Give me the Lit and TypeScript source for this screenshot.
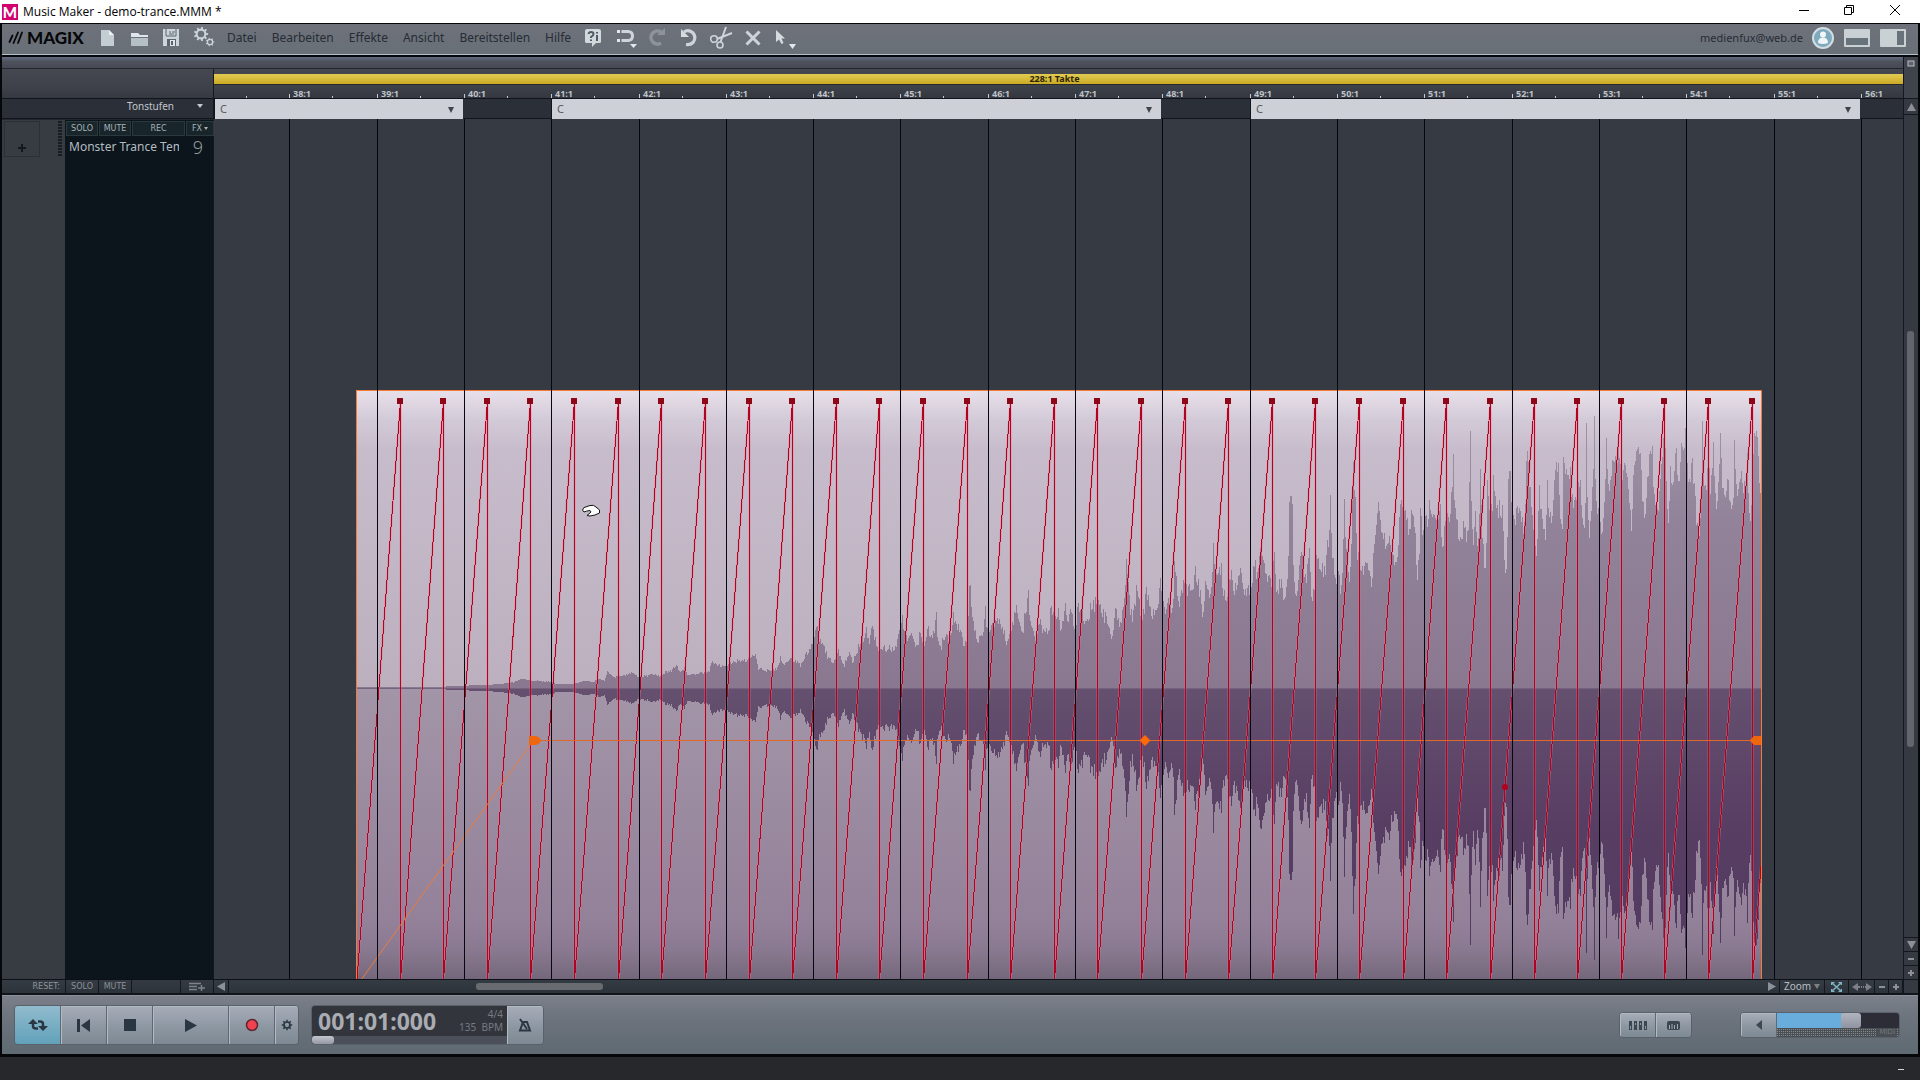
import { LitElement, html, svg, css } from "lit";
import { customElement } from "lit/decorators.js";

/* Timeline geometry, in px from the left edge of the track area. */
const ORIGIN = 214;
const BAR = 87.305;
const FIRST_BAR_X = 289.85 - ORIGIN;
const BARS = Array.from({ length: 19 }, (_, k) => ({
  label: `${38 + k}:1`,
  x: Math.floor(FIRST_BAR_X + BAR * k),
}));

const CLIP = { left: 356 - ORIGIN, right: 1761 - ORIGIN, top: 271, mid: 569, bottom: 861 };

const CHORDS = [
  { name: "C", from: 1, to: 249 },
  { name: "C", from: 338, to: 947 },
  { name: "C", from: 1037, to: 1646 },
];

/* Peak envelope of the audio object: x, amplitude pairs. */
const QUIET: number[] = [
  142, 1, 230, 1, 232, 2, 272, 3, 294, 5, 300, 6, 306, 9, 323, 7, 338, 6, 342, 4, 358, 4, 370, 7, 378, 6, 386, 9,
  390, 8, 393, 16, 400, 11, 409, 13, 419, 16, 424, 11, 430, 12, 439, 14, 445, 12, 449, 15, 456, 17, 463, 23, 465, 16,
  470, 20, 474, 13, 489, 15, 495, 16, 497, 27, 503, 22, 509, 23, 518, 25, 526, 28, 532, 28, 539, 34, 542, 30, 544, 19,
  550, 18, 556, 17, 562, 19, 566, 30, 570, 24, 577, 28, 584, 26,
];
const MIDDLE: number[] = [
  0, 320, 15, 290, 30, 265, 50, 207, 60, 245, 70, 250, 80, 290, 100, 305, 113, 265, 130, 320, 147, 270, 155, 305, 168,
  285, 175, 255, 185, 240, 198, 215, 205, 250, 215, 205, 225, 240, 235, 270, 260, 265, 280, 270, 290, 250, 300, 190,
  308, 170, 315, 240, 330, 225, 350, 260, 360, 212, 370, 270, 380, 205, 395, 225, 408, 160, 420, 270, 430, 225, 445,
  240, 460, 160, 465, 190, 480, 205, 490, 265, 500, 225, 507, 70, 512, 110, 520, 190, 530, 240, 545, 235, 555, 130,
  562, 220, 575, 200, 590, 170, 605, 195, 620, 250, 630, 225, 640, 180, 653, 135, 665, 230, 672, 170, 684, 75, 692,
  200, 705, 235, 718, 165, 728, 215, 745, 215, 752, 97, 760, 170, 775, 155, 780, 200, 796, 108, 805, 185, 815, 145,
  825, 225, 830, 135, 840, 150, 850, 170, 860, 190, 870, 150, 890, 125, 905, 160, 920, 180, 935, 235, 945, 135, 955,
  190, 965, 170, 978, 0, 985, 80, 995, 175, 1010, 60, 1025, 165, 1040, 65, 1050, 155, 1070, 160, 1077, 68, 1085, 100,
  1095, 170, 1105, 115, 1115, 150, 1123, -60, 1135, 120, 1155, 30, 1160, 100, 1170, 90, 1185, 20, 1200, 95, 1207, 175,
  1215, 55, 1225, 115, 1240, -45, 1250, 60, 1263, 0, 1275, 120, 1290, 35, 1300, 95, 1320, 0, 1328, 90, 1340, 110,
  1352, 70, 1360, 20, 1370, 35, 1385, -75, 1395, 40, 1410, 60, 1423, -30, 1430, 100,
];
const LOUD: number[] = [
  0, 610, 12, 655, 20, 600, 27, 350, 36, 365, 45, 655, 55, 570, 68, 520, 75, 590, 88, 470, 94, 670, 105, 555, 115, 540,
  130, 580, 140, 495, 150, 370, 158, 540, 168, 600, 172, 570, 180, 620, 192, 378, 205, 590, 219, 240, 225, 345, 230,
  510, 245, 570, 260, 530, 272, 620, 280, 500, 295, 345, 305, 450, 318, 490, 326, 475, 335, 530, 345, 535, 360, 365,
  368, 400, 376, 380, 385, 460, 392, 410, 405, 435, 410, 590, 420, 400, 430, 460, 436, 430, 448, 360, 455, 390, 470,
  430, 480, 390, 487, 510, 492, 440, 505, 410, 519, 230, 530, 440, 545, 480, 550, 405, 560, 470, 570, 135, 578, 490,
  585, 380, 592, 480, 600, 280, 605, 400, 614, 555, 621, 275, 632, 395, 639, 300, 650, 400, 657, 385, 668, 400, 677,
  575, 683, 285, 692, 285, 700, 440, 708, 370, 720, 420, 730, 440, 740, 135, 750, 330, 758, 410, 768, 510, 776, 290,
  785, 415, 795, 460, 801, 280, 810, 420, 825, 270, 835, 260, 845, 480, 849, 210, 861, 305, 870, 260, 880, 390, 891,
  290, 902, 305, 910, 470, 918, 130, 926, 455, 935, 320, 942, 130, 950, 410, 958, 370, 965, 450, 978, 165, 985, 330,
  998, 230, 1008, 260, 1015, 130, 1023, 300, 1033, 220, 1045, 310, 1052, 430, 1060, 235, 1070, 230, 1082, 190, 1090,
  400, 1100, 310, 1108, 200, 1116, 220, 1127, 410, 1140, 280, 1154, 40, 1163, 440, 1170, 255, 1178, 320, 1187, 160,
  1195, 300, 1203, 170, 1210, 220, 1217, 90, 1225, 310, 1236, 225, 1245, 350, 1255, 470, 1266, 150, 1275, 325, 1286,
  190, 1290, 320, 1299, 205, 1308, 370, 1320, 140, 1330, 350, 1342, 260, 1355, 400, 1362, 175, 1370, 350, 1380, 275,
  1390, 330, 1402, 215, 1409, 440, 1416, 200, 1430, 115, 1436, 280, 1443, 360,
];

function pairs(flat: number[], x0: number, scale: number, base: number): [number, number][] {
  const out: [number, number][] = [];
  for (let i = 0; i < flat.length; i += 2) {
    out.push([x0 + flat[i] / scale, base ? (base - flat[i + 1]) / scale : flat[i + 1]]);
  }
  return out;
}

const ENVELOPE = [...pairs(QUIET, 0, 1, 0), ...pairs(MIDDLE, 586, 3, 385), ...pairs(LOUD, 1066, 3, 925)];

/* One amplitude per pixel column: peaks fall off quickly, so spikes stay narrow. */
function columns(): number[] {
  const out: number[] = [];
  let i = 0;
  for (let x = CLIP.left; x < CLIP.right; x++) {
    while (i < ENVELOPE.length - 2 && ENVELOPE[i + 1][0] <= x) i++;
    const [xa, a] = ENVELOPE[i];
    const [xb, b] = ENVELOPE[i + 1];
    const t = Math.min(1, Math.max(0, (x - xa) / (xb - xa)));
    const sharp = Math.abs(a - b) > 20 ? 2.2 : 1.2;
    const eased = a > b ? Math.pow(t, 1 / sharp) : Math.pow(t, sharp);
    const v = a + (b - a) * eased;
    const noise = Math.abs(Math.sin(x * 127.1) * 43758.5) % 1;
    const grain = v > 5 ? (noise - 0.5) * Math.min(18, v * 0.18) : 0;
    out.push(Math.max(1, Math.round(v + grain)));
  }
  return out;
}

const COLS = columns();
function wavePath(dir: number): string {
  let d = `M${CLIP.left} ${CLIP.mid}`;
  COLS.forEach((a, i) => {
    d += `V${CLIP.mid + dir * a}H${CLIP.left + i + 1}`;
  });
  return d + `V${CLIP.mid}Z`;
}
const WAVE_UP = wavePath(-1);
const WAVE_DOWN = wavePath(1);

/* Saw-tooth automation: 32 ramps, then one cut off by the end of the object. */
const SAW_STEP = 43.61;
const PEAKS = Array.from({ length: 32 }, (_, n) => Math.floor(186.15 + SAW_STEP * n));
const SAW_TOP = 282;
let sawPath = `M${CLIP.left + 1} 861`;
PEAKS.forEach((x) => {
  sawPath += `L${x + 0.5} ${SAW_TOP}V861`;
});
sawPath += `L${CLIP.right} 747`;

@customElement("app-root")
export class AppRoot extends LitElement {
  static styles = css`
    :host {
      display: flex;
      flex-direction: column;
      min-height: 100vh;
      background: #27282c;
      font-family: "Noto Sans", "Open Sans", sans-serif;
      font-size: 12px;
      color: #c3c7cc;
      --line: #15181e;
    }
    * { box-sizing: border-box; }
    button, select, input { font: inherit; color: inherit; margin: 0; padding: 0; border: 0; border-radius: 0; background: none; }
    svg { display: block; flex: none; }
    a { color: inherit; text-decoration: none; }

    .title { display: flex; align-items: center; height: 23px; padding: 0 16px 0 2px; background: #fff; color: #000; font-family: "Open Sans", "Noto Sans", sans-serif; font-size: 12px; }
    .title h1 { margin: 0 auto 0 5px; font: inherit; }
    .app-icon { display: grid; place-items: center; width: 16px; height: 16px; background: #d3006f; color: #fff; font: 900 15px/16px Lato, sans-serif; }
    .win { align-self: flex-start; display: grid; place-items: center; width: 45px; height: 20px; }
    .win:last-child { width: 18px; margin-left: 15px; }

    .frame { flex: 1; display: flex; flex-direction: column; padding: 1px 2px 3px; background: #05070b; }
    .menu { display: flex; align-items: center; height: 31px; padding: 0 12px 3px 6px; background: linear-gradient(#6e7179, #697078); border-bottom: 1px solid #b3c0ca; color: #262c35; }
    .brand { display: flex; align-items: center; gap: 4px; width: 83px; color: #05070a; font: 900 17px/20px Lato, sans-serif; }
    .tool { display: grid; place-items: center; width: 32px; height: 28px; }
    .menu nav { display: flex; gap: 15px; margin: 0 6px 0 8px; line-height: 20px; }
    .account { display: flex; align-items: center; gap: 9px; margin-left: auto; font-size: 11px; line-height: 20px; }
    .panes { display: flex; gap: 10px; margin-left: 10px; }

    .editor { flex: 1; display: flex; margin-top: 2px; background: #363b43; }
    .stage { flex: 1; min-width: 0; display: flex; flex-direction: column; }
    .overview { height: 12px; border-bottom: 1px solid #23262e; background: linear-gradient(#626b80, #4e525d 40%, #474a54); }
    .row { display: flex; }
    .side { flex: none; width: 212px; border-right: 1px solid var(--line); }
    .fill { flex: 1; min-width: 0; overflow: hidden; }

    .ruler { height: 30px; border-bottom: 1px solid #12141b; background: linear-gradient(#454851, #3f424a 60%, #353941); }
    .ruler .fill { padding-top: 5px; }
    .range { height: 11px; border-bottom: 1px solid #2a2a2a; background: linear-gradient(#e2cb53, #cbab25); color: #2c2504; font-size: 9px; font-weight: 700; line-height: 10px; text-align: center; padding-right: 8px; }
    .marks { width: 100%; height: 13px; background: linear-gradient(#3f434b, #343740); }
    .marks text { font-size: 9px; font-weight: 700; fill: #bdc2c8; }

    .chords { height: 20px; border-bottom: 1px solid #12141b; background: #2b2f38; }
    .degree { display: flex; align-items: center; justify-content: flex-end; gap: 23px; width: 100%; height: 14px; padding-right: 10px; font-size: 10px; }
    .chord { position: relative; flex: none; height: 20px; }
    .chord select { display: block; appearance: none; width: 100%; height: 20px; padding-left: 5px; background: #cdd0d6; color: #575b61; font-size: 11px; line-height: 18px; }
    .chord svg { position: absolute; right: 9px; top: 8px; pointer-events: none; }
    .chords .fill { overflow: visible; }
    .gap { flex: none; border-right: 1px solid #12141b; }

    .tracks { flex: 1; min-height: 860px; align-items: stretch; }
    .tracks .side { display: flex; background: #373b42; border-top: 1px solid #24282e; }
    .gutter { display: flex; justify-content: space-between; width: 63px; padding: 1px 3px 0 2px; }
    .add { display: grid; place-items: end center; width: 36px; height: 36px; padding-bottom: 3px; border: 1px solid #2c3036; color: #14181d; }
    .grip { width: 4px; height: 35px; background: repeating-linear-gradient(#191d23 0 2px, transparent 2px 3px); }
    .head { flex: 1; min-width: 0; padding: 1px 0 0 1px; background: #0b151b; }
    .keys { display: grid; grid-template-columns: 32px 32px 53px 28px; gap: 1px; }
    .key { display: flex; align-items: center; justify-content: center; gap: 2px; height: 15px; border: 1px solid #2b383c; background: #18262b; color: #a9b1b5; font: 8px/10px "DejaVu Sans", sans-serif; }
    .name { display: flex; align-items: center; justify-content: space-between; height: 21px; padding: 0 10px 0 3px; color: #b4bcc1; }
    .name span { width: 110px; overflow: hidden; white-space: nowrap; }
    .name b { font-size: 18px; font-weight: 300; color: #93999d; }
    .lane { width: 100%; height: 100%; }

    .foot { height: 16px; border-top: 1px solid #0d1017; border-bottom: 2px solid #10141b; background: linear-gradient(#353b43, #2d333a); color: #8e949a; }
    .foot .side { display: flex; justify-content: flex-end; }
    .cell { display: grid; place-items: center; height: 13px; border-right: 1px solid #14171d; font: 8px/10px "DejaVu Sans", sans-serif; color: #8b9197; }
    .side .cell { border-right: 0; border-left: 1px solid #14171d; }
    .w1 { width: 14px; } .w2 { width: 15px; } .w3 { width: 24px; } .w4 { width: 26px; } .w5 { width: 33px; } .w6 { width: 45px; } .w7 { width: 49px; }
    .reset { margin-right: 5px; font: 8px/13px "DejaVu Sans", sans-serif; }
    .zoom { display: flex; align-items: center; justify-content: center; gap: 3px; font: 10px/13px "Noto Sans", sans-serif; color: #b9bec4; }
    .hscroll { flex: 1; padding: 3px 0 0 247px; }
    .thumb { width: 127px; height: 7px; border-radius: 3px; background: #686b70; }

    .vbar { display: flex; flex-direction: column; width: 15px; border-left: 1px solid #14171d; background: #353941; }
    .vbar button { display: grid; place-items: center; height: 14px; border-top: 1px solid #14171d; }
    .vbar .corner { height: 41px; padding-bottom: 29px; border: 0; background: #3f434c; }
    .vbar .up { height: 17px; border-bottom: 1px solid #14171d; }
    .vtrack { flex: 1; padding: 216px 4px 0 3px; }
    .vthumb { height: 416px; border-radius: 3px; background: #62656b; }
    .vbar .end { height: 16px; border-top: 1px solid #14171d; border-bottom: 2px solid #10141b; }

    .transport { display: flex; align-items: flex-start; height: 59px; padding: 9px 18px 0 12px; border-top: 1px solid #8b909b; background: linear-gradient(#7a7f8a, #6b727b 45%, #5f6a73); }
    .group { display: flex; border: 1px solid #59616a; border-radius: 4px; overflow: hidden; }
    .group button { display: grid; place-items: center; height: 38px; border-right: 1px solid #5f6871; background: linear-gradient(#a6adb9, #8d97a2 55%, #7d8993); box-shadow: inset 1px 1px 0 #b3bac4; }
    .group button:last-child { border-right: 0; }
    .group .on { background: linear-gradient(#92bbce, #76adc2 55%, #62a2ba); box-shadow: none; }
    .b1 { width: 46px; } .b2 { width: 76px; } .b3 { width: 23px; } .b4 { width: 35px; } .b5 { width: 36px; }
    .display { margin-left: 12px; }
    .readout { width: 195px; background: #4b4f59; }
    .digits { display: flex; justify-content: space-between; align-items: center; height: 30px; padding: 0 4px 0 6px; background: #33353d; color: #a9acb2; }
    .time { font-size: 23px; font-weight: 700; line-height: 30px; }
    .tempo { color: #777a82; font-size: 10px; line-height: 13px; text-align: right; white-space: pre; }
    .shuttle { appearance: none; display: block; width: 100%; height: 8px; }
    .shuttle::-webkit-slider-thumb { appearance: none; width: 22px; height: 8px; border-radius: 3px; background: linear-gradient(#c3c6cf, #9598a3); }
    .right { display: flex; gap: 48px; margin: 7px 0 0 auto; }
    .right .group button { height: 24px; }
    .level { display: flex; flex-direction: column; width: 122px; background: #4a4f55; }
    .volume { appearance: none; display: block; width: 122px; height: 15px; background: linear-gradient(90deg, #68addb 66px, #2c2d36 66px); }
    .volume::-webkit-slider-thumb { appearance: none; width: 20px; height: 15px; border-radius: 3px; background: linear-gradient(#b1b5c0, #9094a0); }
    .meter { display: flex; justify-content: flex-end; align-items: center; height: 9px; padding-right: 3px; color: #74787d; font: 7px/9px "DejaVu Sans", sans-serif; background: repeating-linear-gradient(90deg, transparent 0 1px, #4a4f55 1px 2px), repeating-linear-gradient(#4a4f55 0 1px, #858b8a 1px 2px); }
    .meter span { padding: 0 1px 0 2px; background: #4a4f55; }
    .tray { display: flex; justify-content: flex-end; height: 23px; padding: 12px 16px 0 0; }
    .tray i { width: 6px; height: 1px; background: #d5d5d5; }
  `;

  private menuItems = ["Datei", "Bearbeiten", "Effekte", "Ansicht", "Bereitstellen", "Hilfe"];

  private tri(dir: "down" | "up" | "left" | "right", w = 8, h = 6, fill = "#8d9197") {
    const d = {
      down: `M0 0H${w}L${w / 2} ${h}Z`,
      up: `M0 ${h}H${w}L${w / 2} 0Z`,
      left: `M${w} 0V${h}L0 ${h / 2}Z`,
      right: `M0 0V${h}L${w} ${h / 2}Z`,
    }[dir];
    return html`<svg width=${w} height=${h} aria-hidden="true"><path d=${d} fill=${fill} /></svg>`;
  }

  private tool(label: string, art: unknown) {
    return html`<button class="tool" aria-label=${label}>
      <svg width="28" height="28" viewBox="0 0 28 28" fill="none" stroke="#cdd5da" stroke-width="2">${art}</svg>
    </button>`;
  }

  private title() {
    return html`<header class="title">
      <span class="app-icon" aria-hidden="true">M</span>
      <h1>Music Maker - demo-trance.MMM *</h1>
      <button class="win" aria-label="Minimieren"><svg width="10" height="10"><path d="M0 5.5H10" stroke="#000" /></svg></button>
      <button class="win" aria-label="Verkleinern"><svg width="10" height="10" fill="none" stroke="#000"><path d="M.5 2.5H7.5V9.5H.5ZM2.5 2.5V.5H9.5V7.5H7.5" /></svg></button>
      <button class="win" aria-label="Schließen"><svg width="10" height="10"><path d="M0 0L10 10M10 0L0 10" stroke="#000" /></svg></button>
    </header>`;
  }

  private gear(cx: number, cy: number, r: number, teeth: number, w: number) {
    return svg`<circle cx=${cx} cy=${cy} r=${r} stroke-width=${w} />${Array.from({ length: teeth }, (_, i) => {
      const a = (i * 2 * Math.PI) / teeth;
      const p = (k: number) => `${cx + Math.cos(a) * k} ${cy + Math.sin(a) * k}`;
      return svg`<path d=${`M${p(r)}L${p(r + w * 1.3)}`} stroke-width=${w * 0.85} />`;
    })}`;
  }

  private menu() {
    return html`<div class="menu">
      <div class="brand">
        <svg width="15" height="13" viewBox="0 0 15 13"><path d="M1.500 11L4.500 4.500M5.500 12L10 1.500M10 12L14 1.500" stroke="#05070a" stroke-width="1.8" stroke-linecap="round" /></svg>
        <span>MAGIX</span>
      </div>
      ${this.tool("Neu", svg`<path d="M8 6H16L21 11V22H8Z" fill="#c3cdd2" stroke="none" /><path d="M16 6V11H21Z" fill="#eef2f4" stroke="none" />`)}
      ${this.tool("Öffnen", svg`<path d="M6 9H13L15 11H23V13H6Z" fill="#dfe5e8" stroke="none" /><path d="M6 14H23V22H6Z" fill="#b4c0c6" stroke="none" />`)}
      ${this.tool("Speichern", svg`<path d="M6 5H22V22H6Z" fill="#ccd5da" stroke="none" /><path d="M9 5V12H19V5M12 8H14M15 8H18M12 10H17" stroke="#5b646c" stroke-width="1" /><path d="M10 15H19V22H10Z" fill="#5b646c" stroke="none" /><path d="M13 16H18V22H13Z" fill="#dfe5e8" stroke="none" /><path d="M15 17V21" stroke="#5b646c" />`)}
      ${this.tool("Einstellungen", svg`${this.gear(12, 10, 4.4, 9, 2.1)}${this.gear(21, 18, 2.6, 7, 1.3)}`)}
      <nav aria-label="Hauptmenü">${this.menuItems.map((m) => html`<a href="#">${m}</a>`)}</nav>
      ${this.tool("Hilfe-Assistent", svg`<path d="M6 7Q6 5 8 5H20Q22 5 22 7V18Q22 19 20 19H17L13 23V19H8Q6 19 6 18Z" fill="#d2d9dd" stroke="none" /><path d="M9.500 10Q10 8 12 8Q14.500 8 14.500 10Q14.500 11.500 12 13V14M12 15.500V17M18 11V17M18 8V9.500" stroke="#525b63" />`)}
      ${this.tool("Magnetraster", svg`<path d="M6 7.500H9M6 16.500H9" stroke-width="3" stroke="#e3e8eb" /><path d="M10.500 7.500H17.500Q21.500 8 21.500 12T17.500 16.500H10.500" stroke-width="3" /><path d="M19 20H26L22.500 24Z" fill="#e3e8eb" stroke="none" />`)}
      ${this.tool("Wiederholen", svg`<path d="M18 8A6.500 6.500 0 1 0 18 19" stroke="#8c949a" stroke-width="3.500" /><path d="M14 11H22V4Z" fill="#8c949a" stroke="none" />`)}
      ${this.tool("Rückgängig", svg`<path d="M9 8Q13 5 17.500 8.500Q22 13 18 18.500Q15.500 21 11 20.500" stroke-width="3.200" /><path d="M6 5V13H14Z" fill="#d5dce0" stroke="none" />`)}
      ${this.tool("Schneiden", svg`<circle cx="7" cy="15" r="3.300" stroke-width="1.600" /><circle cx="13" cy="21" r="3" stroke-width="1.600" /><path d="M10 15L25 9M13.500 18L19 3" />`)}
      ${this.tool("Löschen", svg`<path d="M7.500 7.500L20.500 20.500M20.500 7.500L7.500 20.500" stroke-width="3" />`)}
      ${this.tool("Mausmodus", svg`<path d="M5 6V18L8 15.500L10.500 20L12.500 19L10.500 14.500H14Z" fill="#d5dce0" stroke="none" /><path d="M18 20H25L21.500 25Z" fill="#e3e8eb" stroke="none" />`)}
      <div class="account">
        <a href="#">medienfux@web.de</a>
        <svg width="22" height="22" viewBox="0 0 22 22"><circle cx="11" cy="11" r="10" fill="#7fa9bd" stroke="#d3dee4" stroke-width="2" /><circle cx="11" cy="7.500" r="3" fill="#f1f5f7" /><path d="M6 16Q6 10.500 11 10.500T16 16Q11 18 6 16Z" fill="#f1f5f7" /></svg>
      </div>
      <div class="panes">
        <button aria-label="Mediapool unten"><svg width="26" height="18"><rect width="26" height="18" rx="1" fill="#c9d1d5" /><rect x="2" y="9" width="22" height="7" fill="#68727a" /></svg></button>
        <button aria-label="Mediapool rechts"><svg width="26" height="18"><rect width="26" height="18" rx="1" fill="#c9d1d5" /><rect x="17" y="2" width="7" height="14" fill="#68727a" /></svg></button>
      </div>
    </div>`;
  }

  private ruler() {
    return html`<div class="row ruler">
      <div class="side"></div>
      <div class="fill">
        <div class="range">228:1 Takte</div>
        <svg class="marks">
          ${BARS.map((b) => svg`<path d=${`M${b.x + 0.5} 9V13M${b.x + 43.5} 11V13`} stroke="#c6cad0" /><text x=${b.x + 4} y="12">${b.label}</text>`)}
          <path d="M32.500 11V13" stroke="#c6cad0" />
        </svg>
      </div>
    </div>`;
  }

  private chords() {
    let x = 0;
    return html`<div class="row chords">
      <div class="side"><button class="degree">Tonstufen ${this.tri("down", 6, 4, "#c3c7cc")}</button></div>
      <div class="fill row">
        ${CHORDS.map((c) => {
          const gap = c.from - x;
          x = c.to;
          return html`<span class="gap" style="width:${gap}px"></span>
            <label class="chord" style="width:${c.to - c.from}px">
              <select aria-label="Akkord"><option>${c.name}</option></select>
              ${this.tri("down", 6, 6, "#3f444b")}
            </label>`;
        })}
      </div>
    </div>`;
  }

  private lane() {
    const { left, right, top, mid, bottom } = CLIP;
    const w = right - left;
    return svg`
      <defs>
        <linearGradient id="up" x1="0" x2="0" y1="0" y2="1">
          <stop offset="0" stop-color="#e8e0e9" /><stop offset=".1" stop-color="#d3cad8" /><stop offset=".2" stop-color="#c7bccb" /><stop offset="1" stop-color="#bcb0bf" />
        </linearGradient>
        <linearGradient id="low" x1="0" x2="0" y1="0" y2="1">
          <stop offset="0" stop-color="#a395a8" /><stop offset=".8" stop-color="#938199" /><stop offset=".9" stop-color="#897990" /><stop offset="1" stop-color="#73667a" />
        </linearGradient>
        <linearGradient id="waveUp" gradientUnits="userSpaceOnUse" x1="0" x2="0" y1="290" y2="569">
          <stop offset="0" stop-color="#a094a6" /><stop offset=".4" stop-color="#92839a" /><stop offset="1" stop-color="#8a7890" />
        </linearGradient>
        <linearGradient id="waveLow" gradientUnits="userSpaceOnUse" x1="0" x2="0" y1="569" y2="840">
          <stop offset="0" stop-color="#65506f" /><stop offset=".5" stop-color="#583e63" /><stop offset="1" stop-color="#523a60" />
        </linearGradient>
      </defs>
      <rect x=${left} y=${top} width=${w} height=${mid - top} fill="url(#up)" />
      <rect x=${left} y=${mid} width=${w} height=${bottom - mid} fill="url(#low)" />
      <rect x=${left} y=${bottom} width=${w} height="400" fill="#73667a" />
      <g shape-rendering="crispEdges">
        <path d=${WAVE_UP} fill="url(#waveUp)" />
        <path d=${WAVE_DOWN} fill="url(#waveLow)" />
        <path d=${`M${left} ${mid}H${right}`} stroke="#75637e" />
      </g>
      <path d=${sawPath} fill="none" stroke="#f26b86" stroke-opacity=".5" stroke-width="2" />
      <path d=${sawPath} fill="none" stroke="#b00322" stroke-linejoin="bevel" shape-rendering="crispEdges" />
      ${PEAKS.map((x) => svg`<rect x=${x - 3} y="279" width="6" height="6" fill="#8f0716" />`)}
      <circle cx="1291" cy="668" r="3" fill="#b3001b" />
      <path d="M147 861L319 622" stroke="#f07a3a" />
      <path d=${`M317 621.500H${right}`} stroke="#e0692a" />
      <path d="M315 617H322Q326 618 327 621.500Q326 625 322 626H315Z" fill="#ee660d" />
      <path d="M931 616L936.500 621.500L931 627L925.500 621.500Z" fill="#ff6a08" />
      <path d=${`M${right + 1} 617H1540L1535.500 621.500L1540 626H${right + 1}Z`} fill="#ee660d" />
      <path d=${`M${left + 0.5} 1400V${top + 0.5}H${right + 0.5}V1400`} fill="none" stroke="#f47a35" />
      <path d=${BARS.map((b) => `M${b.x + 0.5} 0V2000`).join("")} stroke="#07080f" />
      <path d="M368.500 391Q369 388 373 387.500L376 386.500Q380 385.500 382 388L385.500 391V394L381 396L376 397L373 396.500L377 393L376 391.500Q372 392 370 393Z" fill="#fff" stroke="#111" stroke-linejoin="round" />`;
  }

  private tracks() {
    return html`<div class="row tracks">
      <div class="side">
        <div class="gutter">
          <button class="add" aria-label="Spur hinzufügen"><svg width="10" height="10"><path d="M1 5H9M5 1V9" stroke="#14181d" stroke-width="2" /></svg></button>
          <div class="grip"></div>
        </div>
        <div class="head">
          <div class="keys">
            <button class="key">SOLO</button><button class="key">MUTE</button><button class="key">REC</button>
            <button class="key">FX ${this.tri("down", 4, 3, "#a9b1b5")}</button>
          </div>
          <div class="name"><span>Monster Trance Tem</span><b>9</b></div>
        </div>
      </div>
      <div class="fill"><svg class="lane" role="img" aria-label="Arranger">${this.lane()}</svg></div>
    </div>`;
  }

  private foot() {
    return html`<div class="row foot">
      <div class="side">
        <span class="reset">RESET:</span>
        <button class="cell w5">SOLO</button><button class="cell w5">MUTE</button><span class="cell w7"></span>
        <button class="cell w5" aria-label="Spur anfügen"><svg width="16" height="9" fill="none" stroke="#7d8389"><path d="M0 1.500H12M0 4.500H8M0 7.500H8M12.500 3V9M9 6H16" stroke-width="1.500" /></svg></button>
      </div>
      <div class="fill row">
        <button class="cell w2" aria-label="Nach links">${this.tri("left", 8, 9)}</button>
        <div class="hscroll"><div class="thumb"></div></div>
        <button class="cell w2" aria-label="Nach rechts">${this.tri("right", 8, 9)}</button>
        <button class="cell w6 zoom">Zoom ${this.tri("down", 6, 5, "#7d8187")}</button>
        <button class="cell w3" aria-label="Alles zeigen"><svg width="11" height="10" viewBox="0 0 11 10" stroke="#7fb4c4" fill="none"><path d="M1 1L10 9M10 1L1 9" stroke-width="1.500" /><path d="M.5 3V.5H3.500M7.500 .5H10.500V3M10.500 7V9.500H7.500M3.500 9.500H.5V7" stroke-width="1.500" /></svg></button>
        <button class="cell w4" aria-label="Zoombereich"><svg width="20" height="8" fill="#7d8187"><path d="M0 4L6 0V8ZM20 4L14 0V8ZM6 3H8V5H6ZM9 3H10V5H9ZM11 3H12V5H11ZM13 3H14V5H13Z" /></svg></button>
        <button class="cell w1" aria-label="Herauszoomen"><svg width="6" height="6"><path d="M0 3H6" stroke="#8d9197" stroke-width="2" /></svg></button>
        <button class="cell w1" aria-label="Hineinzoomen"><svg width="6" height="6"><path d="M0 3H6M3 0V6" stroke="#8d9197" stroke-width="2" /></svg></button>
      </div>
    </div>`;
  }

  private vbar() {
    return html`<div class="vbar">
      <button class="corner" aria-label="Vollbild"><svg width="8" height="7"><rect x="1" y="1" width="6" height="5" fill="#5f636b" stroke="#b9bdc4" /></svg></button>
      <button class="up" aria-label="Nach oben">${this.tri("up", 9, 8)}</button>
      <div class="vtrack"><div class="vthumb"></div></div>
      <button aria-label="Nach unten">${this.tri("down", 9, 8)}</button>
      <button aria-label="Höhe verringern"><svg width="6" height="6"><path d="M0 3H6" stroke="#8d9197" stroke-width="2" /></svg></button>
      <button aria-label="Höhe vergrößern"><svg width="6" height="6"><path d="M0 3H6M3 0V6" stroke="#8d9197" stroke-width="2" /></svg></button>
      <div class="end"></div>
    </div>`;
  }

  private transport() {
    const ink = "#2a3742";
    return html`<div class="transport">
      <div class="group">
        <button class="b1 on" aria-label="Loop"><svg width="20" height="12" viewBox="0 0 20 12" fill="none" stroke=${ink} stroke-width="2.500"><path d="M10 9.500H8Q5 9.500 5 7V4M10 2.500H12Q15 2.500 15 5V8" /><path d="M0 5L5 0L10 5ZM10 7H20L15 12Z" fill=${ink} stroke="none" /></svg></button>
        <button class="b1" aria-label="An den Anfang"><svg width="13" height="13" fill=${ink}><path d="M0 0H3V13H0ZM13 0V13L4 6.500Z" /></svg></button>
        <button class="b1" aria-label="Stopp"><svg width="12" height="12" fill=${ink}><path d="M0 0H12V12H0Z" /></svg></button>
        <button class="b2" aria-label="Wiedergabe"><svg width="12" height="13" fill=${ink}><path d="M0 0L12 6.500L0 13Z" /></svg></button>
        <button class="b1" aria-label="Aufnahme"><svg width="14" height="14"><circle cx="7" cy="7" r="5.500" fill="#f0434f" stroke="#5a2630" stroke-width="1.500" /></svg></button>
        <button class="b3" aria-label="Aufnahmeoptionen"><svg width="14" height="14" fill="none" stroke=${ink}>${this.gear(7, 7, 3, 8, 1.7)}</svg></button>
      </div>
      <div class="group display">
        <div class="readout">
          <div class="digits"><span class="time">001:01:000</span><span class="tempo">4/4
135  BPM</span></div>
          <input class="shuttle" type="range" min="0" max="100" value="0" aria-label="Position" />
        </div>
        <button class="b5" aria-label="Metronom"><svg width="14" height="14" fill="none" stroke=${ink} stroke-width="2"><path d="M5 4L2 12.500H12L9 4H5M2 1L9 11" /></svg></button>
      </div>
      <div class="right">
        <div class="group">
          <button class="b5" aria-label="Mixer"><svg width="18" height="9" fill="#3a4650"><path d="M0 0H3V9H0ZM5 0H8V9H5ZM10 0H13V9H10ZM15 0H18V9H15Z" /><path d="M1 5H2V8H1ZM6 2H7V4H6ZM11 2H12V4H11ZM16 5H17V8H16Z" fill="#8d97a2" /></svg></button>
          <button class="b4" aria-label="Keyboard"><svg width="13" height="9"><rect width="13" height="9" rx="2" fill="#3a4650" /><path d="M2.500 4V8M5 3V8M7.500 4V8M10.500 3V8" stroke="#a0a9b2" /></svg></button>
        </div>
        <div class="group">
          <button class="b5" aria-label="Ton">${this.tri("left", 6, 10, "#3a4650")}</button>
          <div class="level">
            <input class="volume" type="range" min="0" max="100" value="63" aria-label="Lautstärke" />
            <div class="meter"><span>MIDI</span></div>
          </div>
        </div>
      </div>
    </div>`;
  }

  render() {
    return html`${this.title()}
      <main class="frame">
        ${this.menu()}
        <div class="editor">
          <div class="stage">
            <div class="overview"></div>
            ${this.ruler()}${this.chords()}${this.tracks()}${this.foot()}
          </div>
          ${this.vbar()}
        </div>
        ${this.transport()}
      </main>
      <footer class="tray"><i></i></footer>`;
  }
}
